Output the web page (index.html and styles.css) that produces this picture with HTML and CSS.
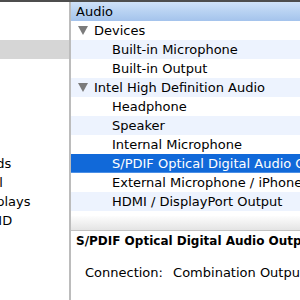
FILE: index.html
```html
<!DOCTYPE html>
<html lang="en">
<head>
  <meta charset="UTF-8">
  <title>System Information - Audio</title>
  <link rel="stylesheet" href="styles.css">
</head>
<body>
  <div class="window">
    <div class="sidebar">
      <ul class="side-list">
        <li>Hardware</li>
        <li>ATA</li>
        <li class="side-selected">Audio</li>
        <li>Bluetooth</li>
        <li>Camera</li>
        <li>Card Reader</li>
        <li>Diagnostics</li>
        <li>Disc Burning</li>
        <li>Ethernet Cards</li>
        <li>Fibre Channel</li>
        <li>Graphics/Displays</li>
        <li>Hardware RAID</li>
        <li>Memory</li>
        <li>PCI</li>
        <li>Printers</li>
      </ul>
    </div>

    <div class="content">
      <div class="outline">
        <div class="outline-header">Audio</div>
        <div class="row group"><span class="disclosure"></span>Devices</div>
        <div class="row child stripe">Built-in Microphone</div>
        <div class="row child">Built-in Output</div>
        <div class="row group stripe"><span class="disclosure"></span>Intel High Definition Audio</div>
        <div class="row child">Headphone</div>
        <div class="row child stripe">Speaker</div>
        <div class="row child">Internal Microphone</div>
        <div class="row child selected">S/PDIF Optical Digital Audio Output</div>
        <div class="row child">External Microphone / iPhone Headset</div>
        <div class="row child stripe">HDMI / DisplayPort Output</div>
      </div>

      <div class="splitter"></div>

      <div class="details">
        <div class="details-title">S/PDIF Optical Digital Audio Output:</div>
        <div class="details-line">
          <span class="details-label">Connection:</span>
          <span class="details-value">Combination Output</span>
        </div>
      </div>
    </div>
  </div>
</body>
</html>
```

FILE: styles.css
```css
body {
  margin: 0;
  font-family: 'DejaVu Sans', 'Liberation Sans', sans-serif;
  font-size: 13px;
  color: #000;
  background: #fff;
}

.window {
  display: flex;
  width: 300px;
  height: 300px;
  border-top: 2px solid #4d4d4d;
  box-sizing: border-box;
  overflow: hidden;
}

/* barra lateral recortada */
.sidebar {
  width: 69px;
  flex: none;
  overflow: hidden;
  border-right: 2px solid #bcbcbc;
  background: #fff;
}
.side-list {
  list-style: none;
  margin: 0 0 0 -86px;
  padding: 0;
}
.side-list li {
  height: 19px;
  line-height: 19px;
  white-space: nowrap;
}
.side-list li.side-selected {
  background: #d6d6d6;
}

.content {
  flex: 1;
  min-width: 0;
  display: flex;
  flex-direction: column;
}

.outline {
  height: 214px;
  flex: none;
}
.outline-header {
  height: 19px;
  line-height: 19px;
  padding-left: 5px;
  background: linear-gradient(#d0e2f8 0%, #b8d2f2 50%, #a4c3ec 100%);
}
.row {
  height: 19px;
  line-height: 19px;
  white-space: nowrap;
  overflow: hidden;
  display: flex;
  align-items: center;
}
.row.group {
  padding-left: 7px;
}
.row.child {
  padding-left: 41px;
}
.row.stripe {
  background: #edf3fe;
}
.row.selected {
  background: #1169d9;
  border-bottom: 1px solid #4b8fe6;
  height: 18px;
  color: #fff;
}
.disclosure {
  width: 0;
  height: 0;
  border-left: 5px solid transparent;
  border-right: 5px solid transparent;
  border-top: 9px solid #7b7b7b;
  margin-right: 6px;
}

.splitter {
  height: 14px;
  flex: none;
  background: linear-gradient(#fdfdfd, #e4e4e4);
  border-bottom: 1px solid #c4c4c4;
}

.details {
  padding: 2px 0 0 5px;
  white-space: nowrap;
  overflow: hidden;
}
.details-title {
  font-size: 12px;
  font-weight: bold;
  height: 16px;
  line-height: 16px;
}
.details-line {
  margin-top: 16px;
  padding-left: 9px;
  line-height: 16px;
}
.details-value {
  margin-left: 6px;
}
```
